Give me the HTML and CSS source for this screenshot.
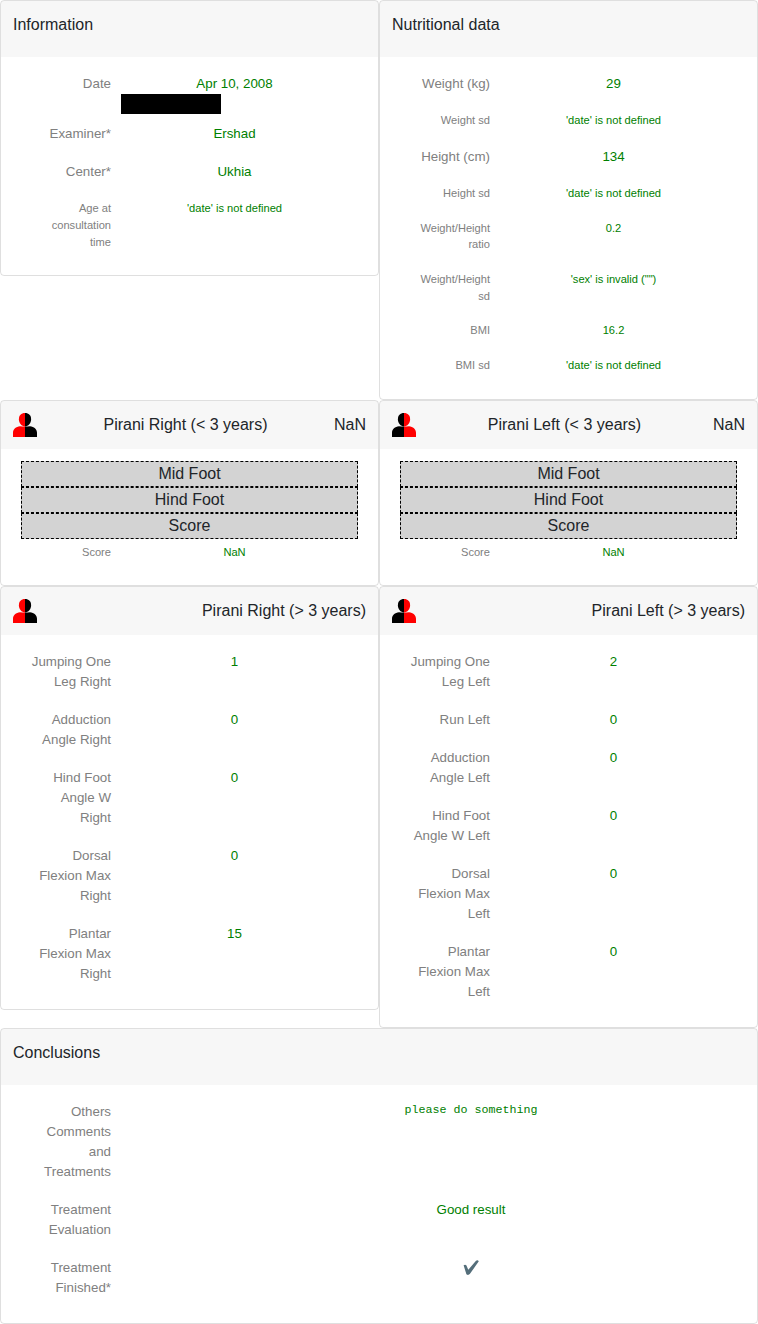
FILE: index.html
```html
<!DOCTYPE html>
<html lang="en">
<head>
<meta charset="utf-8">
<title>Consultation</title>
<link rel="stylesheet" href="styles.css">
</head>
<body>
<svg class="defs" width="0" height="0">
  <symbol id="person" viewBox="0 0 24 24"><path d="M12 0C8.200 0 5.900 2.300 5.900 6.200C5.900 10 8.600 13.400 12 13.400S18.100 10 18.100 6.200C18.100 2.300 15.800 0 12 0Z"/><path d="M0 24v-4.300C0 16 3 13.700 7 13.200C10.200 13.700 13.800 13.700 17 13.200C21 13.700 24 16 24 19.700V24z"/></symbol>
  <clipPath id="left-half"><path d="M0 0h12v24H0z"/></clipPath>
  <clipPath id="right-half"><path d="M12 0h12v24H12z"/></clipPath>
</svg>
<main class="board">
  <section class="card">
    <header class="card-header tall">Information</header>
    <div class="card-body">
      <div class="row date-row"><div class="label">Date</div><div class="value">Apr 10, 2008<span class="redacted"></span></div></div>
      <div class="row"><div class="label">Examiner*</div><div class="value">Ershad</div></div>
      <div class="row"><div class="label">Center*</div><div class="value">Ukhia</div></div>
      <div class="row small"><div class="label">Age at consultation time</div><div class="value">'date' is not defined</div></div>
    </div>
  </section>
  <section class="card">
    <header class="card-header tall">Nutritional data</header>
    <div class="card-body">
      <div class="row"><div class="label">Weight (kg)</div><div class="value">29</div></div>
      <div class="row small"><div class="label">Weight sd</div><div class="value">'date' is not defined</div></div>
      <div class="row"><div class="label">Height (cm)</div><div class="value">134</div></div>
      <div class="row small"><div class="label">Height sd</div><div class="value">'date' is not defined</div></div>
      <div class="row small"><div class="label">Weight/Height ratio</div><div class="value">0.2</div></div>
      <div class="row small"><div class="label">Weight/Height sd</div><div class="value">'sex' is invalid ("")</div></div>
      <div class="row small"><div class="label">BMI</div><div class="value">16.2</div></div>
      <div class="row small"><div class="label">BMI sd</div><div class="value">'date' is not defined</div></div>
    </div>
  </section>
  <section class="card">
    <header class="card-header split"><svg class="icon" viewBox="0 0 24 24"><use href="#person" class="on" clip-path="url(#left-half)"/><use href="#person" clip-path="url(#right-half)"/></svg><span>Pirani Right (&lt; 3 years)</span><span>NaN</span></header>
    <div class="card-body scores">
      <div class="bar">Mid Foot</div><div class="bar">Hind Foot</div><div class="bar">Score</div>
      <div class="row small"><div class="label">Score</div><div class="value">NaN</div></div>
    </div>
  </section>
  <section class="card">
    <header class="card-header split"><svg class="icon" viewBox="0 0 24 24"><use href="#person" clip-path="url(#left-half)"/><use href="#person" class="on" clip-path="url(#right-half)"/></svg><span>Pirani Left (&lt; 3 years)</span><span>NaN</span></header>
    <div class="card-body scores">
      <div class="bar">Mid Foot</div><div class="bar">Hind Foot</div><div class="bar">Score</div>
      <div class="row small"><div class="label">Score</div><div class="value">NaN</div></div>
    </div>
  </section>
  <section class="card">
    <header class="card-header split"><svg class="icon" viewBox="0 0 24 24"><use href="#person" class="on" clip-path="url(#left-half)"/><use href="#person" clip-path="url(#right-half)"/></svg><span>Pirani Right (&gt; 3 years)</span></header>
    <div class="card-body">
      <div class="row"><div class="label">Jumping One Leg Right</div><div class="value">1</div></div>
      <div class="row"><div class="label">Adduction Angle Right</div><div class="value">0</div></div>
      <div class="row"><div class="label">Hind Foot Angle W Right</div><div class="value">0</div></div>
      <div class="row"><div class="label">Dorsal Flexion Max Right</div><div class="value">0</div></div>
      <div class="row"><div class="label">Plantar Flexion Max Right</div><div class="value">15</div></div>
    </div>
  </section>
  <section class="card">
    <header class="card-header split"><svg class="icon" viewBox="0 0 24 24"><use href="#person" clip-path="url(#left-half)"/><use href="#person" class="on" clip-path="url(#right-half)"/></svg><span>Pirani Left (&gt; 3 years)</span></header>
    <div class="card-body">
      <div class="row"><div class="label">Jumping One Leg Left</div><div class="value">2</div></div>
      <div class="row"><div class="label">Run Left</div><div class="value">0</div></div>
      <div class="row"><div class="label">Adduction Angle Left</div><div class="value">0</div></div>
      <div class="row"><div class="label">Hind Foot Angle W Left</div><div class="value">0</div></div>
      <div class="row"><div class="label">Dorsal Flexion Max Left</div><div class="value">0</div></div>
      <div class="row"><div class="label">Plantar Flexion Max Left</div><div class="value">0</div></div>
    </div>
  </section>
  <section class="card wide">
    <header class="card-header tall">Conclusions</header>
    <div class="card-body">
      <div class="row"><div class="label">Others Comments and Treatments</div><div class="value comment">please do something</div></div>
      <div class="row"><div class="label">Treatment Evaluation</div><div class="value">Good result</div></div>
      <div class="row"><div class="label">Treatment Finished*</div><div class="value"><svg class="check" viewBox="0 0 16 16"><path d="M0.600 5.200Q2.200 4.200 3.300 5.200L5.300 9.700L13 0.700Q14.700 -0.400 15.800 1.200L6.800 14.100Q5.200 15.600 3.400 14.300Z"/></svg></div></div>
    </div>
  </section>
</main>
</body>
</html>
```

FILE: styles.css
```css
* { box-sizing: border-box; }
body {
  margin: 0;
  background: #fff;
  color: #212529;
  font: 16px/24px "Liberation Sans", Arial, sans-serif;
}
.defs { position: absolute; }
.board {
  display: grid;
  grid-template-columns: 379px 379px;
  grid-template-rows: 400px 186px 442px 296px;
  align-items: start;
}
.card {
  border: 1px solid rgba(0, 0, 0, .125);
  border-radius: 4px;
  max-height: 100%;
}
.wide { grid-column: 1 / 3; }
.card:nth-child(2) { height: 100%; }
.card-header {
  padding: 12px;
  background: rgba(0, 0, 0, .03);
  border-radius: 3px 3px 0 0;
}
.tall { padding-bottom: 20px; }
.split { display: flex; justify-content: space-between; }
.icon { width: 24px; height: 24px; }
.on { fill: #f00; }
.card-body {
  display: flex;
  flex-direction: column;
  gap: 18px;
  padding: 17px 30px 25px;
  font-size: 13.3333px;
  line-height: 20px;
}
.row { display: flex; gap: 10px; }
.date-row { margin-bottom: 12px; }
.label { width: 80px; flex: none; text-align: right; color: gray; }
.value { flex: 1; text-align: center; color: green; }
.small {
  padding-top: .25px;
  margin-bottom: -.25px;
  font-size: 11.1111px;
  line-height: 16.6667px;
}
.redacted {
  display: block;
  width: 100px;
  height: 20px;
  margin-bottom: -20px;
  background: #000;
}
.scores { gap: 0; padding: 12px 20px 25px; }
.bar {
  height: 26px;
  border: 1px dashed #000;
  background: lightgray;
  color: #212529;
  font-size: 16px;
  line-height: 24px;
  text-align: center;
}
.scores .row { padding: 5px 10px 0; }
.wide .value { padding-left: 94px; }
.wide .comment {
  font-family: "Liberation Mono", monospace;
  font-size: 11.6667px;
  line-height: 17.5px;
}
.check { display: block; width: 16px; height: 16px; margin: 2px auto 0; fill: #546e7a; }
```
